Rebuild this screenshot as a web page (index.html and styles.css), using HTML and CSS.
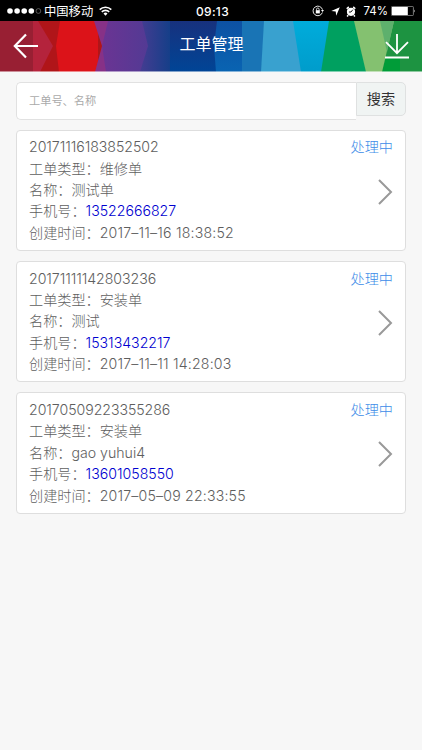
FILE: index.html
```
<!DOCTYPE html>
<html lang="zh-CN">
<head>
    <meta charset="utf-8">
    <meta name="viewport" content="width=device-width, initial-scale=1">
    <title>工单管理</title>
    <link rel="stylesheet" href="styles.css">
</head>
<body>
<div class="status">
    <div class="status-left">
        <svg width="35" height="8" viewBox="0 0 35 8" fill="#fff">
            <circle cx="3" cy="4" r="2.8"/>
            <circle cx="10.1" cy="4" r="2.8"/>
            <circle cx="17.2" cy="4" r="2.8"/>
            <circle cx="24.3" cy="4" r="2.8"/>
            <circle cx="31.4" cy="4" r="2.4" fill="none" stroke="#777" stroke-width=".7"/>
        </svg>
        <span class="carrier">中国移动</span>
        <svg class="wifi" width="13" height="10" viewBox="0 0 13 10" fill="none" stroke="#fff" stroke-width="1.6">
            <path d="M.7 3.6a8.3 8.3 0 0 1 11.6 0M2.8 5.9a5.3 5.3 0 0 1 7.4 0"/>
            <path d="M4.5 7.4a2.9 2.9 0 0 1 4 0l-2 2.3z" fill="#fff" stroke="none"/>
        </svg>
    </div>
    <div class="time">09:13</div>
    <div class="status-right">
        <svg width="12" height="12" viewBox="0 0 12 12" fill="none" stroke="#fff">
            <path d="M10.4 7.5A4.8 4.8 0 1 1 10.5 4.7" stroke-width=".9"/>
            <path d="M9 5h3l-1.5 2z" fill="#fff" stroke="none"/>
            <path d="M3.8 5.2h4v3.2h-4z" fill="#fff" stroke="none"/>
            <path d="M4.5 5.5V4.3a1.3 1.3 0 0 1 2.6 0v1.2" stroke-width=".8"/>
        </svg>
        <svg class="locate" width="9" height="9" viewBox="0 0 9 9" fill="#fff">
            <path d="M8.8.3L5.2 8.7 4.7 4.4.3 4z"/>
        </svg>
        <svg width="10" height="11" viewBox="0 0 10 11">
            <circle cx="5" cy="5.8" r="4.1" fill="#fff"/>
            <path d="M.7 2.8L2.8.9M9.3 2.8L7.2.9M2.2 9.2L1.1 10.5M7.8 9.2l1.1 1.3" stroke="#fff" stroke-width="1.5"/>
            <path d="M6.8 3.7L5 6H2.9" fill="none" stroke="#000" stroke-width=".9"/>
        </svg>
        <span class="percent">74%</span>
        <svg width="25" height="10" viewBox="0 0 25 10">
            <rect x=".4" y=".4" width="22" height="9.2" rx="1" fill="none" stroke="#aaa" stroke-width=".7"/>
            <rect x="1" y="1" width="15.8" height="8" fill="#fff"/>
            <path d="M23.3 3.4q1.4 1.6 0 3.2z" fill="#fff"/>
        </svg>
    </div>
</div>

<div class="header">
    <svg class="header-bg" width="422" height="51" viewBox="0 0 422 51" preserveAspectRatio="none">
        <defs>
            <linearGradient id="violet"><stop offset="0" stop-color="#483c92"/><stop offset="1" stop-color="#123f88"/></linearGradient>
            <linearGradient id="purple"><stop offset="0" stop-color="#6b3493"/><stop offset="1" stop-color="#533a94"/></linearGradient>
            <linearGradient id="navy" x2="0" y2="1"><stop offset="0" stop-color="#17317e"/><stop offset="1" stop-color="#004596"/></linearGradient>
            <linearGradient id="blue" x2="0" y2="1"><stop offset="0" stop-color="#0d51a3"/><stop offset="1" stop-color="#0964b2"/></linearGradient>
            <linearGradient id="cyan" x2="0" y2="1"><stop offset="0" stop-color="#00acdb"/><stop offset="1" stop-color="#009ccb"/></linearGradient>
        </defs>
        <path fill="#981f33" d="M0 0h36v51H0z"/>
        <path fill="#b01519" d="M33 0h70v51H33z"/>
        <path fill="#b4233c" d="M33 0h5l15 25-13 26h-7z"/>
        <path fill="#dc1319" d="M60 0h38v51H59l-3-26z"/>
        <path fill="#873187" d="M94 0h18v51H95l7-26z"/>
        <path fill="url(#violet)" d="M138 0h34v51h-34z"/>
        <path fill="url(#purple)" d="M108 0h34l6 25-8 26h-34l-4-26z"/>
        <path fill="url(#navy)" d="M170 0h50v51h-50z"/>
        <path fill="url(#blue)" d="M217 0h26v51h-27l-2-26z"/>
        <path fill="#1974b5" d="M242 0h24v51h-24z"/>
        <path fill="#39a1cf" d="M264 0h34l4 51h-41z"/>
        <path fill="url(#cyan)" d="M293 0h37v51h-29z"/>
        <path fill="#00a060" d="M329 0h28l12 51h-48z"/>
        <path fill="#1d9341" d="M380 0h42v51h-42z"/>
        <path fill="#009c38" d="M386 36l-4 15h18V36z"/>
        <path fill="#84c170" d="M354 0h40l-12 51h-16z"/>
        <path fill="#5eb06d" d="M380 0h14l-7 31z"/>
        <path fill="#fff" opacity=".5" d="M0 50h422v1H0z"/>
    </svg>
    <a class="back" href="#">
        <svg width="26" height="26" viewBox="0 0 26 26" fill="none" stroke="#fff" stroke-width="2.2">
            <path d="M25 13H2M13 1.5L1.8 13 13 24.5"/>
        </svg>
    </a>
    <h1 class="title">工单管理</h1>
    <a class="download" href="#">
        <svg width="26" height="26" viewBox="0 0 26 26" fill="none" stroke="#fff" stroke-width="1.8">
            <path d="M13 1v19M2 9.2l11 11 11-11M1 24.5h24"/>
        </svg>
    </a>
</div>

<div class="content">
    <form class="search">
        <input class="search-input" type="text" placeholder="工单号、名称">
        <button class="search-btn" type="button">搜索</button>
    </form>

    <div class="card">
        <div class="info">
            <p class="number">20171116183852502</p>
            <p>工单类型：维修单</p>
            <p>名称：测试单</p>
            <p>手机号：<a href="tel:13522666827">13522666827</a></p>
            <p>创建时间：<span class="date">2017–11–16 18:38:52</span></p>
        </div>
        <div class="side">
            <span class="state">处理中</span>
            <svg class="arrow" width="15" height="26" viewBox="0 0 15 26"><path d="M1 1l12 12L1 25"/></svg>
        </div>
    </div>

    <div class="card">
        <div class="info">
            <p class="number">20171111142803236</p>
            <p>工单类型：安装单</p>
            <p>名称：测试</p>
            <p>手机号：<a href="tel:15313432217">15313432217</a></p>
            <p>创建时间：<span class="date">2017–11–11 14:28:03</span></p>
        </div>
        <div class="side">
            <span class="state">处理中</span>
            <svg class="arrow" width="15" height="26" viewBox="0 0 15 26"><path d="M1 1l12 12L1 25"/></svg>
        </div>
    </div>

    <div class="card">
        <div class="info">
            <p class="number">20170509223355286</p>
            <p>工单类型：安装单</p>
            <p>名称：gao yuhui4</p>
            <p>手机号：<a href="tel:13601058550">13601058550</a></p>
            <p>创建时间：<span class="date">2017–05–09 22:33:55</span></p>
        </div>
        <div class="side">
            <span class="state">处理中</span>
            <svg class="arrow" width="15" height="26" viewBox="0 0 15 26"><path d="M1 1l12 12L1 25"/></svg>
        </div>
    </div>
</div>
</body>
</html>
```
FILE: styles.css
```
* {
    box-sizing: border-box;
    margin: 0;
    padding: 0;
}

body {
    min-height: 750px;
    background: #f7f7f7;
    color: #5e5e5e;
    font-family: Inter, "Noto Sans CJK SC", sans-serif;
    font-size: 14.15px;
    font-weight: 300;
}

/* 状态栏 */
.status {
    display: grid;
    grid-template-columns: 1fr auto 1fr;
    align-items: center;
    height: 21px;
    padding: 0 6px 0 7px;
    background: #000;
    color: #fff;
    font-size: 12px;
    font-weight: 400;
    line-height: 21px;
}

.status-left,
.status-right {
    display: flex;
    align-items: center;
}

.status-right {
    justify-content: flex-end;
}

.carrier {
    margin: 0 6px 0 2px;
    font-size: 12.3px;
}

.time {
    padding-left: 2px;
    font-weight: 500;
    letter-spacing: .3px;
}

.locate {
    margin: 0 6px 0 7px;
}

.percent {
    margin: 0 3px 0 7px;
    padding-top: 1px;
    font-size: 11.5px;
}

/* 标题栏 */
.header {
    position: relative;
    display: flex;
    align-items: center;
    justify-content: space-between;
    height: 51px;
    padding: 0 12px 1px 13px;
}

.header-bg {
    position: absolute;
    left: 0;
    top: 0;
}

.back,
.title,
.download {
    position: relative;
    height: 26px;
}

.title {
    color: #fff;
    font-size: 16px;
    font-weight: 400;
    line-height: 22px;
}

.content {
    padding: 10px 16px;
}

.search {
    display: flex;
    align-items: flex-start;
    height: 38px;
    margin-bottom: 9.6px;
}

.search-input {
    flex: 1;
    height: 38px;
    padding: 0 12px;
    border: 1px solid #e1e1e1;
    border-right: 0;
    border-radius: 5px 0 0 5px;
    background: #fff;
    font-family: inherit;
    font-size: 11.2px;
    font-weight: 400;
}

.search-input::placeholder {
    color: #aaa;
}

.search-btn {
    width: 50px;
    height: 34px;
    padding-bottom: 2px;
    border: 1px solid #dfe1e1;
    border-radius: 0 5px 5px 0;
    background: #f0f4f3;
    color: #333;
    font-family: inherit;
    font-size: 14.15px;
}

/* 工单列表 */
.card {
    display: flex;
    justify-content: space-between;
    height: 121.4px;
    margin-bottom: 10px;
    padding: 5.6px 12px 7px;
    border: 1px solid #dedede;
    border-radius: 4px;
    background: #fff;
    line-height: 21.4px;
}

.number {
    letter-spacing: -.05px;
}

.date {
    letter-spacing: .18px;
}

.info a {
    color: #0000d0;
    text-decoration: none;
}

.side {
    display: flex;
    flex-direction: column;
    align-items: flex-end;
}

.state {
    color: #3d8ce8;
}

.arrow {
    margin-top: 21px;
    fill: none;
    stroke: #999;
    stroke-width: 2;
}
```
